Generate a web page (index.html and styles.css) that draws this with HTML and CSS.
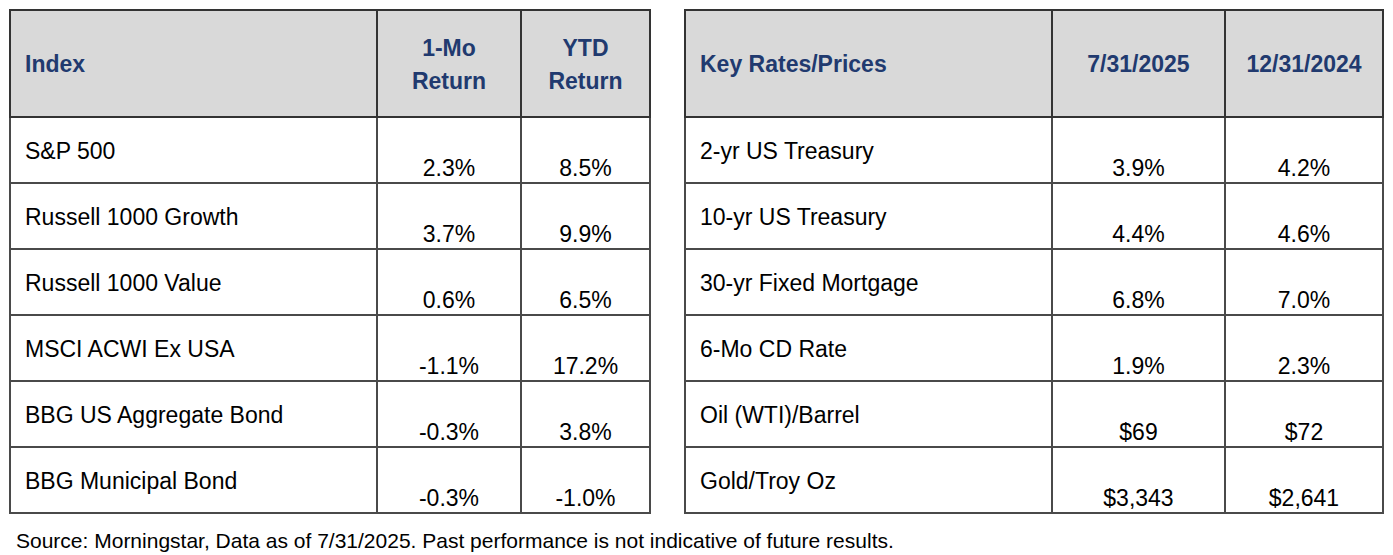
FILE: index.html
```html
<!DOCTYPE html>
<html>
<head>
<meta charset="utf-8">
<link rel="stylesheet" href="styles.css">
</head>
<body>
<div class="page">
  <div class="tables">
    <table class="tbl tbl-left">
      <colgroup><col class="c1"><col class="c2"><col class="c3"></colgroup>
      <thead>
        <tr><th class="lbl">Index</th><th>1-Mo<br>Return</th><th>YTD<br>Return</th></tr>
      </thead>
      <tbody>
        <tr><td class="lbl">S&amp;P 500</td><td class="val">2.3%</td><td class="val">8.5%</td></tr>
        <tr><td class="lbl">Russell 1000 Growth</td><td class="val">3.7%</td><td class="val">9.9%</td></tr>
        <tr><td class="lbl">Russell 1000 Value</td><td class="val">0.6%</td><td class="val">6.5%</td></tr>
        <tr><td class="lbl">MSCI ACWI Ex USA</td><td class="val">-1.1%</td><td class="val">17.2%</td></tr>
        <tr><td class="lbl">BBG US Aggregate Bond</td><td class="val">-0.3%</td><td class="val">3.8%</td></tr>
        <tr><td class="lbl">BBG Municipal Bond</td><td class="val">-0.3%</td><td class="val">-1.0%</td></tr>
      </tbody>
    </table>
    <table class="tbl tbl-right">
      <colgroup><col class="d1"><col class="d2"><col class="d3"></colgroup>
      <thead>
        <tr><th class="lbl">Key Rates/Prices</th><th>7/31/2025</th><th>12/31/2024</th></tr>
      </thead>
      <tbody>
        <tr><td class="lbl">2-yr US Treasury</td><td class="val">3.9%</td><td class="val">4.2%</td></tr>
        <tr><td class="lbl">10-yr US Treasury</td><td class="val">4.4%</td><td class="val">4.6%</td></tr>
        <tr><td class="lbl">30-yr Fixed Mortgage</td><td class="val">6.8%</td><td class="val">7.0%</td></tr>
        <tr><td class="lbl">6-Mo CD Rate</td><td class="val">1.9%</td><td class="val">2.3%</td></tr>
        <tr><td class="lbl">Oil (WTI)/Barrel</td><td class="val">$69</td><td class="val">$72</td></tr>
        <tr><td class="lbl">Gold/Troy Oz</td><td class="val">$3,343</td><td class="val">$2,641</td></tr>
      </tbody>
    </table>
  </div>
  <p class="source">Source: Morningstar, Data as of 7/31/2025. Past performance is not indicative of future results.</p>
</div>
</body>
</html>
```
FILE: styles.css
```css
html, body {
  margin: 0;
  padding: 0;
  background: #ffffff;
}
.page {
  padding: 9px 9px 0 9px;
  font-family: "Liberation Sans", Arial, sans-serif;
  color: #000;
}
.tables {
  display: flex;
  gap: 33px;
  align-items: flex-start;
}
.tbl {
  border-collapse: collapse;
  table-layout: fixed;
  border: 2px solid #3c3c3c;
}
.tbl-left { width: 640px; }
.tbl-right { width: 698px; }
.c1 { width: 367px; }
.c2 { width: 144px; }
.c3 { width: 129px; }
.d1 { width: 367px; }
.d2 { width: 173px; }
.d3 { width: 158px; }
.tbl th {
  background: #d9d9d9;
  color: #213a6f;
  font-weight: bold;
  font-size: 23px;
  line-height: 33px;
  height: 103px;
  padding: 2px 0 0 0;
  text-align: center;
  vertical-align: middle;
  border: 2px solid #333333;
}
.tbl th.lbl {
  text-align: left;
  padding-left: 14px;
}
.tbl td {
  font-size: 23px;
  line-height: 26px;
  height: 63px;
  padding: 0;
  border: 2px solid #4a4a4a;
}
.tbl td.lbl {
  text-align: left;
  vertical-align: top;
  padding-top: 20px;
  padding-left: 14px;
  box-sizing: border-box;
}
.tbl td.val {
  text-align: center;
  vertical-align: bottom;
  padding-bottom: 1px;
}
.source {
  margin: 14px 0 0 7px;
  font-size: 21px;
  line-height: 26px;
}
```
